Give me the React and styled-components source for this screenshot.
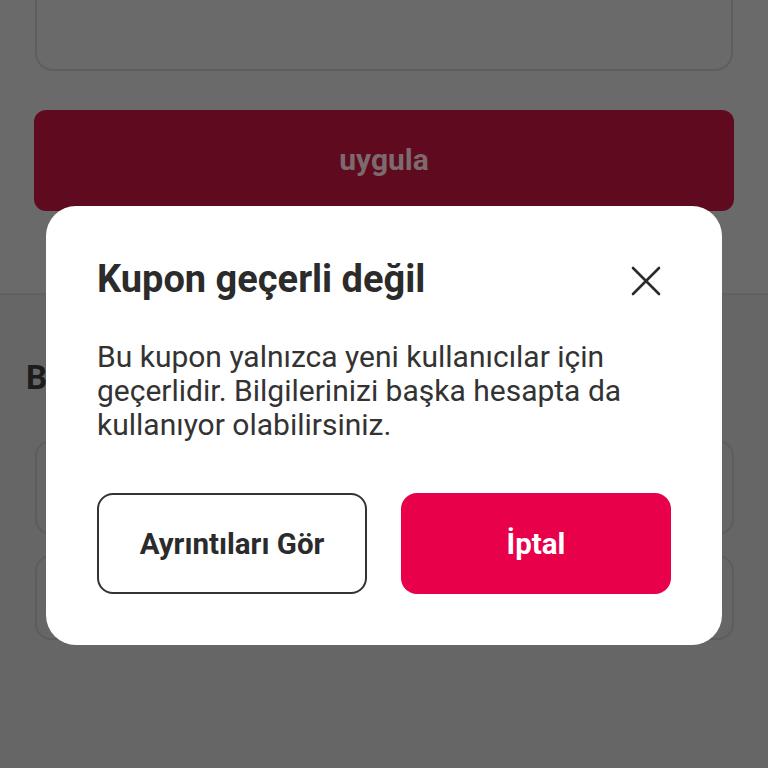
import React from "react";
import styled, { createGlobalStyle } from "styled-components";

const Global = createGlobalStyle`
  html, body { margin: 0; padding: 0; }
  body {
    font-family: Roboto, "Noto Sans", "Liberation Sans", sans-serif;
    background: #666666;
    overflow: hidden;
  }
  #root { height: 768px; }
`;

const Page = styled.div`
  position: relative;
  height: 768px;
  display: flex;
  flex-direction: column;
  background: #666666;
  overflow: hidden;
`;

const TopSection = styled.section`
  display: flex;
  flex-direction: column;
  gap: 39px;
  padding: 0 34px;
  height: 295px;
  box-sizing: border-box;
  background: #6a6a6a;
  border-bottom: 2px solid #616161;
`;

const NoteBox = styled.div`
  margin: -60px 1px 0 1px;
  height: 131px;
  flex-shrink: 0;
  border: 2px solid #5e5e5e;
  border-radius: 18px;
  box-sizing: border-box;
`;

const ApplyButton = styled.div`
  height: 101px;
  flex-shrink: 0;
  border-radius: 12px;
  background: #5f0a1f;
  color: #7c6a6f;
  font-size: 30px;
  font-weight: 700;
  display: flex;
  align-items: center;
  justify-content: center;
  padding-bottom: 2px;
  box-sizing: border-box;
`;

const LowerSection = styled.section`
  display: flex;
  flex-direction: column;
  padding: 64px 34px 0 26px;
`;

const SectionTitle = styled.div`
  font-size: 33px;
  font-weight: 700;
  color: #1c1c1c;
  line-height: 38px;
  margin-bottom: 43px;
`;

const CardList = styled.div`
  display: flex;
  flex-direction: column;
  gap: 20px;
  padding-left: 9px;
`;

const Card = styled.div`
  height: ${(p) => p.$h}px;
  border: 2px solid #5d5d5d;
  border-radius: 16px;
  box-sizing: border-box;
`;

const Overlay = styled.div`
  position: absolute;
  inset: 0;
  display: flex;
  align-items: flex-start;
  justify-content: flex-start;
  padding: 206px 0 0 46px;
  box-sizing: border-box;
`;

const Dialog = styled.div`
  width: 676px;
  height: 439px;
  background: #ffffff;
  border-radius: 30px;
  padding: 50px 51px 0 51px;
  box-sizing: border-box;
  display: flex;
  flex-direction: column;
`;

const Header = styled.div`
  display: flex;
  align-items: center;
  justify-content: space-between;
  height: 46px;
`;

const Title = styled.h2`
  margin: 0;
  font-size: 38px;
  line-height: 46px;
  font-weight: 700;
  color: #2b2b2b;
`;

const CloseButton = styled.button`
  width: 40px;
  height: 40px;
  border: 0;
  background: transparent;
  padding: 0;
  margin: 4px 5px 0 0;
  display: flex;
  align-items: center;
  justify-content: center;
  color: #2b2b2b;
`;

const Body = styled.p`
  margin: 38px 0 0 0;
  font-size: 30px;
  line-height: 34px;
  color: #333333;
  font-weight: 400;
`;

const Actions = styled.div`
  display: grid;
  grid-template-columns: 1fr 1fr;
  gap: 34px;
  margin-top: 51px;
`;

const ActionButton = styled.button`
  height: 101px;
  border-radius: 16px;
  font-family: inherit;
  font-size: 29.5px;
  font-weight: 700;
  display: flex;
  align-items: center;
  justify-content: center;
  box-sizing: border-box;
  border: ${(p) => (p.$primary ? "0" : "2px solid #333333")};
  background: ${(p) => (p.$primary ? "#e8004a" : "#ffffff")};
  color: ${(p) => (p.$primary ? "#ffffff" : "#2b2b2b")};
`;

const CloseIcon = () => (
  <svg width="30" height="30" viewBox="0 0 30 30" fill="none">
    <path d="M2 2 L28 28 M28 2 L2 28" stroke="currentColor" strokeWidth="2.6" strokeLinecap="round" />
  </svg>
);

export default function App() {
  return (
    <>
      <Global />
      <Page>
        <TopSection>
          <NoteBox />
          <ApplyButton>uygula</ApplyButton>
        </TopSection>
        <LowerSection>
          <SectionTitle>B</SectionTitle>
          <CardList>
            <Card $h={95} />
            <Card $h={85} />
          </CardList>
        </LowerSection>
        <Overlay>
          <Dialog role="dialog">
            <Header>
              <Title>Kupon geçerli değil</Title>
              <CloseButton aria-label="Kapat">
                <CloseIcon />
              </CloseButton>
            </Header>
            <Body>
              Bu kupon yalnızca yeni kullanıcılar için geçerlidir. Bilgilerinizi başka hesapta da kullanıyor olabilirsiniz.
            </Body>
            <Actions>
              <ActionButton>Ayrıntıları Gör</ActionButton>
              <ActionButton $primary>İptal</ActionButton>
            </Actions>
          </Dialog>
        </Overlay>
      </Page>
    </>
  );
}
